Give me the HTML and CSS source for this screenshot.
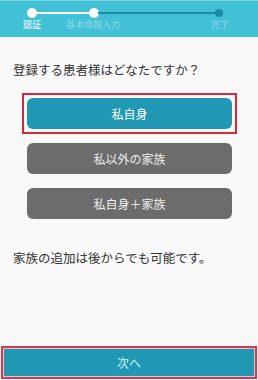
FILE: index.html
```html
<!DOCTYPE html>
<html lang="ja">
<head>
  <meta charset="UTF-8" />
  <meta name="viewport" content="width=device-width, initial-scale=1.0"/>
  <title>患者登録</title>
  <link rel="stylesheet" href="styles.css">
</head>
<body>

<div class="screen">
  <header class="steps">
    <div class="track">
      <span class="dot done"></span>
      <span class="line done"></span>
      <span class="dot done"></span>
      <span class="line"></span>
      <span class="dot small"></span>
    </div>
    <div class="labels">
      <span class="label active">認証</span>
      <span class="label">基本情報入力</span>
      <span></span>
      <span class="label">完了</span>
    </div>
  </header>

  <main class="content">
    <p class="question">登録する患者様はどなたですか？</p>

    <div class="choices">
      <div class="selected">
        <button class="btn btn-primary">私自身</button>
      </div>
      <button class="btn btn-gray">私以外の家族</button>
      <button class="btn btn-gray">私自身＋家族</button>
    </div>

    <p class="note">家族の追加は後からでも可能です。</p>
  </main>

  <footer class="footer">
    <button class="next">次へ</button>
  </footer>
</div>

</body>
</html>
```

FILE: styles.css
```css
body {
  margin: 0;
  padding: 0;
  background: #f8f8f8;
  font-family: "Noto Sans CJK JP", "Noto Sans", sans-serif;
  color: #333;
}
.screen {
  display: flex;
  flex-direction: column;
  width: 258px;
  height: 380px;
  overflow: hidden;
}
.steps {
  background-color: #41c0d6;
  height: 37px;
  border-top: 1px solid #7fd6e4;
  box-sizing: border-box;
  padding-top: 7px;
}
.track {
  display: flex;
  align-items: center;
  padding-left: 27px;
  height: 10px;
}
.dot {
  width: 10px;
  height: 10px;
  border-radius: 50%;
  background: #1a8ca4;
  flex: none;
}
.dot.done {
  background: #fff;
}
.dot.small {
  width: 8px;
  height: 8px;
}
.line {
  height: 2px;
  background: #1a8ca4;
  width: 118px;
  margin: 0 -1px;
}
.line.done {
  background: #fff;
  width: 54px;
}
.labels {
  display: grid;
  grid-template-columns: 64px 58px 1fr 40px 18px;
  margin-top: 1px;
  font-size: 9px;
  line-height: 12px;
}
.label {
  text-align: center;
  color: rgba(255,255,255,0.4);
}
.label.active {
  color: #fff;
}
.content {
  flex: 1;
  padding: 0 13px;
}
.question {
  margin: 24px 0 0;
  font-size: 12.5px;
  line-height: 18px;
}
.choices {
  display: flex;
  flex-direction: column;
  align-items: center;
  gap: 14px;
  margin-top: 19px;
}
.selected {
  border: 2px solid #d8283c;
  padding: 3px;
  margin: -5px 0 -5px 1px;
}
.btn {
  display: block;
  width: 205px;
  height: 31px;
  border: none;
  border-radius: 6px;
  color: #fff;
  font-family: inherit;
  font-size: 12px;
  padding: 0;
}
.btn-primary {
  background-color: #2198b3;
}
.btn-gray {
  background-color: #6c6c6c;
  color: #eee;
  margin-left: 1px;
}
.note {
  margin: 30px 0 0;
  font-size: 12.5px;
  line-height: 18px;
}
.footer {
  padding: 0 1px 1px;
}
.next {
  display: block;
  width: 100%;
  height: 33px;
  border: 2px solid #d23a50;
  box-shadow: inset 0 0 0 1px #e8c3c8;
  background-color: #2198b3;
  color: #c9eef6;
  font-family: inherit;
  font-size: 12px;
  padding: 0;
}
```
